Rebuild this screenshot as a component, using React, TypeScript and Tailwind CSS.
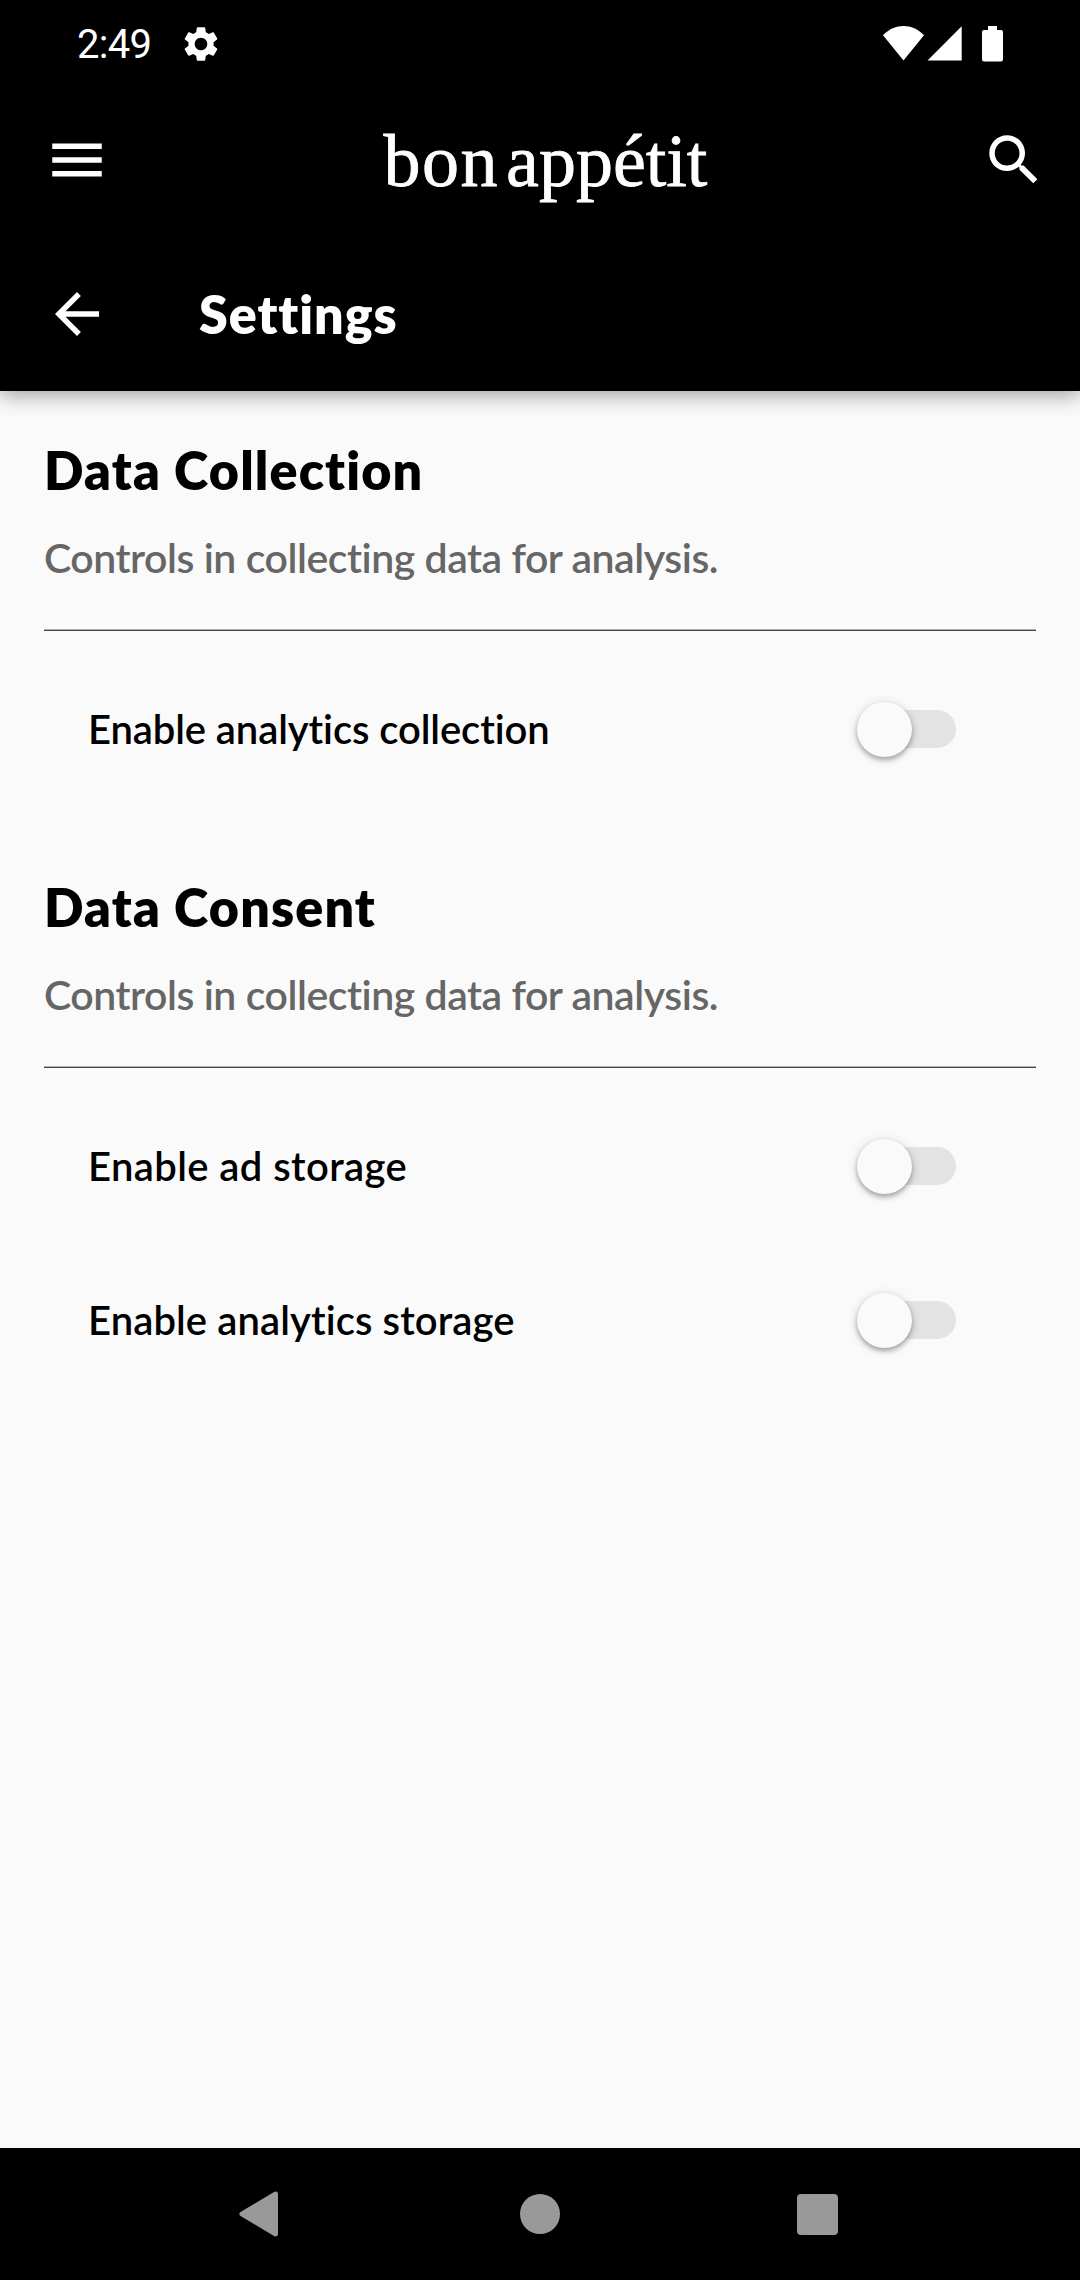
function StatusBar() {
  return (
    <div className="flex h-[87px] items-center bg-black pl-[77px] pr-[77px] text-white">
      <span className="pt-[2px] font-[Roboto,sans-serif] text-[40px] leading-[48px] tracking-[-0.7px]">2:49</span>
      <svg className="ml-[29px] h-[42px] w-[42px]" viewBox="0 0 24 24" fill="currentColor">
        <path d="M19.14 12.94c.04-.3.06-.61.06-.94 0-.32-.02-.64-.07-.94l2.03-1.58c.18-.14.23-.41.12-.61l-1.92-3.32c-.12-.22-.37-.29-.59-.22l-2.39.96c-.5-.38-1.03-.7-1.62-.94l-.36-2.54c-.04-.24-.24-.41-.48-.41h-3.84c-.24 0-.43.17-.47.41l-.36 2.54c-.59.24-1.13.57-1.62.94l-2.39-.96c-.22-.08-.47 0-.59.22L2.74 8.87c-.12.21-.08.47.12.61l2.03 1.58c-.05.3-.09.63-.09.94s.02.64.07.94l-2.03 1.58c-.18.14-.23.41-.12.61l1.92 3.32c.12.22.37.29.59.22l2.39-.96c.5.38 1.03.7 1.62.94l.36 2.54c.05.24.24.41.48.41h3.84c.24 0 .44-.17.47-.41l.36-2.54c.59-.24 1.13-.56 1.62-.94l2.39.96c.22.08.47 0 .59-.22l1.92-3.32c.12-.22.07-.47-.12-.61l-2.01-1.58zM12 15.6c-1.98 0-3.6-1.62-3.6-3.6s1.62-3.6 3.6-3.6 3.6 1.62 3.6 3.6-1.62 3.6-3.6 3.6z" />
      </svg>
      <svg className="ml-auto h-[36px] w-[41px]" viewBox="0 0 41 36" fill="currentColor">
        <path d="M0 9.3C12-3 29-3 41 9.3L20.5 34.5z" />
      </svg>
      <svg className="ml-[3px] h-[36px] w-[35px]" viewBox="0 0 35 36" fill="currentColor">
        <path d="M.5 34.5 34.7.3v34.2z" />
      </svg>
      <svg className="ml-[20px] h-[36px] w-[21px]" viewBox="0 0 21 36" fill="currentColor">
        <path d="M6 0h9v4h4a2 2 0 0 1 2 2v27.500a2 2 0 0 1-2 2H2a2 2 0 0 1-2-2V6a2 2 0 0 1 2-2h4z" />
      </svg>
    </div>
  );
}

function BrandBar() {
  return (
    <div className="flex h-[146px] items-center justify-between bg-black pl-[44px] pr-[33px] text-white">
      <svg className="h-[66px] w-[66px]" viewBox="0 0 24 24" fill="currentColor">
        <path d="M3 18h18v-2H3v2zm0-5h18v-2H3v2zm0-7v2h18V6H3z" />
      </svg>
      <div className="flex pt-[2px] font-['Liberation_Serif',serif] text-[74px] leading-[84px] [-webkit-text-stroke:0.8px_white]">
        <span className="tracking-[1.5px]">bon</span>
        <span className="ml-[7px]">appétit</span>
      </div>
      <svg className="h-[66px] w-[66px]" viewBox="0 0 24 24" fill="currentColor">
        <path d="M15.5 14h-.79l-.28-.27C15.410 12.590 16 11.110 16 9.500 16 5.910 13.090 3 9.500 3S3 5.910 3 9.500 5.910 16 9.500 16c1.610 0 3.090-.59 4.230-1.570l.27.28v.79l5 4.990L20.490 19l-4.990-5zm-6 0C7.010 14 5 11.990 5 9.500S7.010 5 9.500 5 14 7.010 14 9.500 11.990 14 9.500 14z" />
      </svg>
    </div>
  );
}

function TitleBar() {
  return (
    <div className="flex h-[158px] items-center bg-black pl-[44px] pt-[3px] text-white">
      <svg className="h-[66px] w-[66px]" viewBox="0 0 24 24" fill="currentColor">
        <path d="M20 11H7.830l5.590-5.590L12 4l-8 8 8 8 1.410-1.410L7.830 13H20v-2z" />
      </svg>
      <h1 className="ml-[89px] text-[52px] font-extrabold leading-[62px] tracking-[0.95px]">Settings</h1>
    </div>
  );
}

function Toggle() {
  return (
    <button className="flex h-[56px] w-[99px] items-center" role="switch" aria-checked={false}>
      <span className="flex h-[38px] w-full items-center rounded-full bg-[#e3e3e3]">
        <span className="size-[55px] shrink-0 rounded-full bg-[#fafafa] shadow-[0_3px_5px_rgba(0,0,0,0.3),0_1px_12px_rgba(0,0,0,0.12)]" />
      </span>
    </button>
  );
}

type Row = { label: string; tracking: string };

function Section({ title, rows }: { title: string; rows: Row[] }) {
  return (
    <section className="px-[44px]">
      <h2 className="text-[52px] font-extrabold leading-[62px] tracking-[1.15px]">{title}</h2>
      <p className="mt-[32px] text-[41px] font-semibold leading-[50px] tracking-[-0.46px] text-[#666]">
        Controls in collecting data for analysis.
      </p>
      <div className="mt-[46px] h-[2px] border-b border-[#444] bg-[#b0b0b0]" />
      <div className="mt-[21px]">
        {rows.map((row) => (
          <div key={row.label} className="flex h-[154px] items-center justify-between pl-[44px] pr-[80px]">
            <span className={`text-[40px] font-semibold leading-[50px] ${row.tracking}`}>{row.label}</span>
            <Toggle />
          </div>
        ))}
      </div>
    </section>
  );
}

const collectionRows: Row[] = [{ label: "Enable analytics collection", tracking: "tracking-[-0.1px]" }];

const consentRows: Row[] = [
  { label: "Enable ad storage", tracking: "tracking-[0.4px]" },
  { label: "Enable analytics storage", tracking: "tracking-[0.1px]" },
];

export default function App() {
  return (
    <div className="flex h-[2280px] w-[1080px] flex-col bg-[#fafafa] font-[Lato,sans-serif] text-black">
      <header className="shadow-[0_4px_20px_rgba(0,0,0,0.38)]">
        <StatusBar />
        <BrandBar />
        <TitleBar />
      </header>
      <main className="flex flex-1 flex-col gap-[70px] pt-[48px]">
        <Section title="Data Collection" rows={collectionRows} />
        <Section title="Data Consent" rows={consentRows} />
      </main>
      <nav className="flex h-[132px] items-center bg-black text-[#999]">
        <svg className="ml-[239px] h-[46px] w-[40px]" viewBox="0 0 40 46" fill="currentColor">
          <path d="M1.500 21 35 1c2-1.200 4-.2 4 2v40c0 2.200-2 3.200-4 2L1.500 25c-1.600-1-1.600-3 0-4z" />
        </svg>
        <span className="ml-[241px] size-[40px] rounded-full bg-[#999]" />
        <span className="ml-[237px] size-[41px] rounded-[4px] bg-[#999]" />
      </nav>
    </div>
  );
}
